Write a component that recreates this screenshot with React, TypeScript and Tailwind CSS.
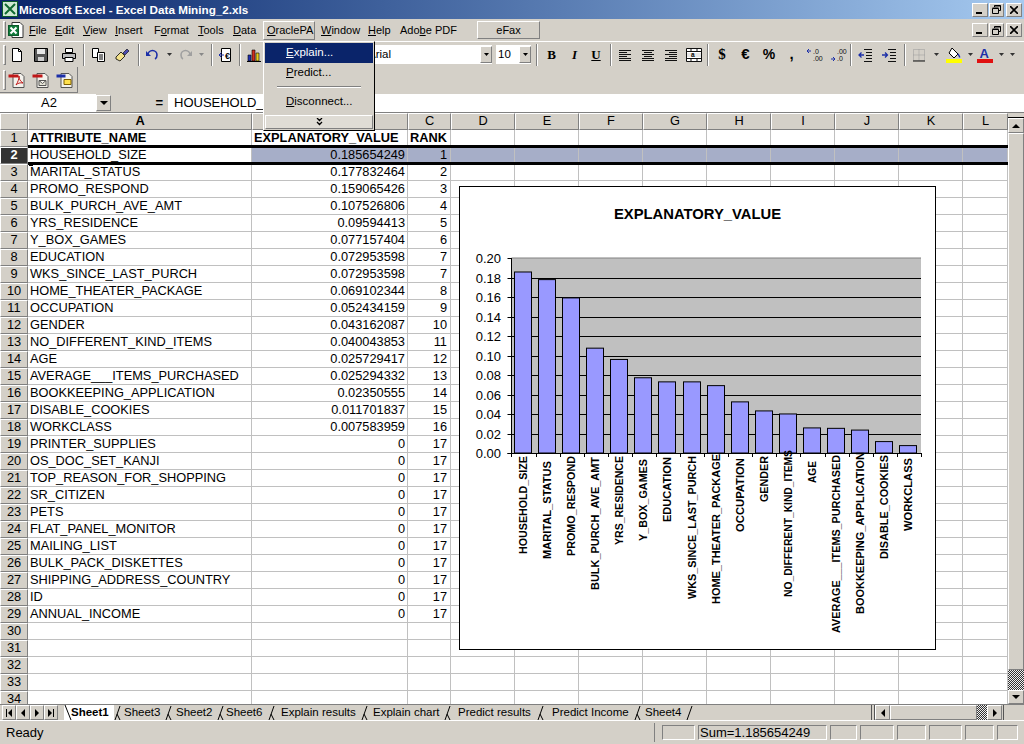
import React from 'react';

const raised = 'border border-t-white border-l-white border-b-[#808080] border-r-[#808080]';
const sunken = 'border border-t-[#808080] border-l-[#808080] border-b-white border-r-white';

const rows: [string, string, string][] = [
  ['HOUSEHOLD_SIZE', '0.185654249', '1'],
  ['MARITAL_STATUS', '0.177832464', '2'],
  ['PROMO_RESPOND', '0.159065426', '3'],
  ['BULK_PURCH_AVE_AMT', '0.107526806', '4'],
  ['YRS_RESIDENCE', '0.09594413', '5'],
  ['Y_BOX_GAMES', '0.077157404', '6'],
  ['EDUCATION', '0.072953598', '7'],
  ['WKS_SINCE_LAST_PURCH', '0.072953598', '7'],
  ['HOME_THEATER_PACKAGE', '0.069102344', '8'],
  ['OCCUPATION', '0.052434159', '9'],
  ['GENDER', '0.043162087', '10'],
  ['NO_DIFFERENT_KIND_ITEMS', '0.040043853', '11'],
  ['AGE', '0.025729417', '12'],
  ['AVERAGE___ITEMS_PURCHASED', '0.025294332', '13'],
  ['BOOKKEEPING_APPLICATION', '0.02350555', '14'],
  ['DISABLE_COOKIES', '0.011701837', '15'],
  ['WORKCLASS', '0.007583959', '16'],
  ['PRINTER_SUPPLIES', '0', '17'],
  ['OS_DOC_SET_KANJI', '0', '17'],
  ['TOP_REASON_FOR_SHOPPING', '0', '17'],
  ['SR_CITIZEN', '0', '17'],
  ['PETS', '0', '17'],
  ['FLAT_PANEL_MONITOR', '0', '17'],
  ['MAILING_LIST', '0', '17'],
  ['BULK_PACK_DISKETTES', '0', '17'],
  ['SHIPPING_ADDRESS_COUNTRY', '0', '17'],
  ['ID', '0', '17'],
  ['ANNUAL_INCOME', '0', '17'],
];

const gridCols = 'grid grid-cols-[28px_224px_156px_43px_64px_64px_64px_64px_64px_64px_64px_64px_45px]';
const emptyCols = ['D', 'E', 'F', 'G', 'H', 'I', 'J', 'K', 'L'];

// label: start = lower end of the rotated text, len = its length on screen
const bars = [
  { name: 'HOUSEHOLD_SIZE', v: 0.185654, start: 554, len: 98 },
  { name: 'MARITAL_STATUS', v: 0.177832, start: 559, len: 98 },
  { name: 'PROMO_RESPOND', v: 0.159065, start: 556, len: 100 },
  { name: 'BULK_PURCH_AVE_AMT', v: 0.107527, start: 590, len: 133 },
  { name: 'YRS_RESIDENCE', v: 0.095944, start: 545, len: 89 },
  { name: 'Y_BOX_GAMES', v: 0.077157, start: 541, len: 82 },
  { name: 'EDUCATION', v: 0.072954, start: 522, len: 65 },
  { name: 'WKS_SINCE_LAST_PURCH', v: 0.072954, start: 599, len: 143 },
  { name: 'HOME_THEATER_PACKAGE', v: 0.069102, start: 604, len: 150 },
  { name: 'OCCUPATION', v: 0.052434, start: 532, len: 74 },
  { name: 'GENDER', v: 0.043162, start: 502, len: 46 },
  { name: 'NO_DIFFERENT_KIND_ITEMS', v: 0.040044, start: 597, len: 147 },
  { name: 'AGE', v: 0.025729, start: 483, len: 22 },
  { name: 'AVERAGE___ITEMS_PURCHASED', v: 0.025294, start: 633, len: 178 },
  { name: 'BOOKKEEPING_APPLICATION', v: 0.023506, start: 614, len: 162 },
  { name: 'DISABLE_COOKIES', v: 0.011702, start: 559, len: 104 },
  { name: 'WORKCLASS', v: 0.007584, start: 531, len: 73 },
];

const tabs = [
  { name: 'Sheet1', w: 'w-[50px]', pl: 'pl-[7px]' },
  { name: 'Sheet3', w: 'w-[51px]', pl: 'pl-[10px]' },
  { name: 'Sheet2', w: 'w-[52px]', pl: 'pl-[11px]' },
  { name: 'Sheet6', w: 'w-[51px]', pl: 'pl-[9px]' },
  { name: 'Explain results', w: 'w-[93px]', pl: 'pl-[13px]' },
  { name: 'Explain chart', w: 'w-[83px]', pl: 'pl-[12px]' },
  { name: 'Predict results', w: 'w-[93px]', pl: 'pl-[14px]' },
  { name: 'Predict Income', w: 'w-[97px]', pl: 'pl-[15px]' },
  { name: 'Sheet4', w: 'w-[52px]', pl: 'pl-[11px]' },
];

function Ico({ children, w = 16 }: { children: React.ReactNode; w?: number }) {
  return (
    <svg width={w} height={16} viewBox={`0 0 ${w} 16`} className="block shrink-0">
      {children}
    </svg>
  );
}

function Slot({ w, children }: { w: string; children?: React.ReactNode }) {
  return <div className={`${w} flex h-full shrink-0 items-center justify-center`}>{children}</div>;
}

function Sep() {
  return <div className="mx-[1px] h-[22px] w-[2px] shrink-0 border-l border-l-[#808080] border-r border-r-white" />;
}

function Caret({ color = '#000' }: { color?: string }) {
  return (
    <svg width="5" height="3" viewBox="0 0 5 3" className="block shrink-0">
      <path d="M0 0h5L2.5 3z" fill={color} />
    </svg>
  );
}

function WinButtons() {
  return (
    <div className="flex gap-[1px]">
      <div className={`${raised} flex h-[14px] w-[16px] items-end bg-[#d4d0c8] pb-[2px] pl-[3px]`}>
        <div className="h-[2px] w-[6px] bg-black" />
      </div>
      <div className={`${raised} mr-[1px] flex h-[14px] w-[15px] items-center justify-center bg-[#d4d0c8]`}>
        <svg width="9" height="9" viewBox="0 0 9 9">
          <path d="M2.5 2V.5h6v5H7M.5 3.5h6v5h-6zM.5 3h6M2.5 1h6" fill="none" stroke="#000" />
        </svg>
      </div>
      <div className={`${raised} flex h-[14px] w-[16px] items-center justify-center bg-[#d4d0c8]`}>
        <svg width="8" height="8" viewBox="0 0 8 8">
          <path d="M0 0l8 8M8 0L0 8" stroke="#000" strokeWidth="1.6" />
        </svg>
      </div>
    </div>
  );
}

function MenuItem({ w, first, rest, pre = '', on = false }: { w: string; first: string; rest: string; pre?: string; on?: boolean }) {
  return (
    <div className={`${w} flex h-[19px] shrink-0 items-center whitespace-nowrap ${on ? `${raised} pl-[3px]` : 'pl-[1px]'}`}>
      <span>
        {pre}
        <span className="underline">{first}</span>
        {rest}
      </span>
    </div>
  );
}

function ExcelIcon({ page = false }: { page?: boolean }) {
  return (
    <Ico>
      {page && <path d="M4 .5h8l3 3v12H4z" fill="#fff" stroke="#333" />}
      <rect x={0.5} y={page ? 3.5 : 0.5} width={page ? 10 : 15} height={page ? 10 : 15} fill={page ? '#0f7a3a' : '#cfe8d2'} stroke="#0a5a2a" />
      <path d={page ? 'M2.5 5.5l6 6M8.5 5.5l-6 6' : 'M3 3l10 10M13 3L3 13'} stroke={page ? '#fff' : '#0f6a30'} strokeWidth="2" />
    </Ico>
  );
}

function PdfIcon({ kind }: { kind: number }) {
  return (
    <Ico w={18}>
      <path d="M5 1.500h8l3 3v11H5z" fill="#f4f2ec" stroke="#555" />
      {kind === 0 && <path d="M8 13c2-3 3-6 3-9 0 3 1 5 4 7-3-.5-5 0-7 2z" fill="none" stroke="#c01818" />}
      {kind === 1 && <path d="M7 8.500h7v5H7zM7 8.500l3.500 3 3.500-3" fill="#e8e6d8" stroke="#555" />}
      {kind === 2 && <path d="M8 7.500h7v5H8z" fill="#ffe14d" stroke="#806000" />}
      <rect x="0.500" y="2.500" width={kind === 2 ? 9 : 10} height="3" fill={kind === 2 ? '#1c2fa8' : '#c01818'} />
    </Ico>
  );
}

function LinesIcon({ kind }: { kind: 'l' | 'c' | 'r' }) {
  const lines = [
    [2, 14],
    [kind === 'l' ? 2 : kind === 'c' ? 4 : 6, kind === 'l' ? 10 : kind === 'c' ? 12 : 14],
    [2, 14],
    [kind === 'l' ? 2 : kind === 'c' ? 4 : 6, kind === 'l' ? 10 : kind === 'c' ? 12 : 14],
    [2, 14],
  ];
  return (
    <Ico>
      {lines.map(([a, b], i) => (
        <path key={i} d={`M${a} ${3.5 + i * 2}H${b}`} stroke="#111" />
      ))}
      <path d="M2 13.500H14" stroke="#111" />
    </Ico>
  );
}

function DecimalIcon({ inc }: { inc: boolean }) {
  return (
    <Ico w={18}>
      <text x="7" y="7" fontSize="7" fontFamily="'Liberation Sans', sans-serif" fill="#111">{inc ? '.0' : '.00'}</text>
      <text x="7" y="14" fontSize="7" fontFamily="'Liberation Sans', sans-serif" fill="#111">{inc ? '.00' : '.0'}</text>
      <path d={inc ? 'M1 4h4M3 2l-2 2 2 2' : 'M1 12h4M3 10l2 2-2 2'} fill="none" stroke="#1c2fa8" />
    </Ico>
  );
}

function IndentIcon({ flip }: { flip: boolean }) {
  return (
    <Ico>
      <path d="M7 2.500h8M9 5.500h6M9 8.500h6M9 11.500h6M7 14.500h8" stroke="#111" />
      <path d={flip ? 'M1 8h5M4 5.500L6.500 8 4 10.500' : 'M2 8h5M4.500 5.500L2 8l2.500 2.500'} fill="none" stroke="#1c2fa8" strokeWidth="1.300" />
    </Ico>
  );
}

function Chart() {
  const left = 511.5;
  const right = 921;
  const top = 258;
  const base = 453;
  const ticks = [0, 0.02, 0.04, 0.06, 0.08, 0.1, 0.12, 0.14, 0.16, 0.18, 0.2];
  const y = (v: number) => base - (v / 0.2) * (base - top);
  return (
    <svg width="478" height="465" viewBox="459 186 478 465" className="absolute left-[459px] top-[73px] block">
      <rect x="459.500" y="186.500" width="476" height="463" fill="#fff" stroke="#000" />
      <text x="697.500" y="219" textAnchor="middle" textLength="167" lengthAdjust="spacingAndGlyphs" fontSize="14" fontWeight="700" fontFamily="'Liberation Sans', Arial, sans-serif" fill="#000">
        EXPLANATORY_VALUE
      </text>
      <rect x={left} y={top} width={right - left} height={base - top} fill="#c0c0c0" />
      <path d={`M${left} ${top}H${right}`} stroke="#808080" />
      {ticks.map((t) => (
        <g key={t}>
          {t > 0 && t < 0.2 && <path d={`M${left} ${Math.round(y(t)) + 0.5}H${right}`} stroke="#000" />}
          <path d={`M${left - 4} ${Math.round(y(t)) + 0.5}H${left}`} stroke="#000" />
          <text x="501" y={y(t) + 5} textAnchor="end" fontSize="13" fontFamily="'Liberation Sans', Arial, sans-serif" fill="#000">
            {t.toFixed(2)}
          </text>
        </g>
      ))}
      <path d={`M${left} ${top}V${base + 4}M${left - 4} ${base + 0.5}H${right}`} stroke="#000" />
      {bars.map((b, i) => {
        const x = Math.round(514 + i * 24.08) + 0.5;
        const h = y(b.v);
        const cx = 523 + i * 24.08;
        return (
          <g key={b.name}>
            <rect x={x} y={h} width="17" height={base - h} fill="#9999ff" stroke="#000" />
            <path d={`M${Math.round(left + (i + 1) * 24.08) + 0.5} ${base}v4`} stroke="#000" />
            <text
              transform={`rotate(-90 ${cx + 4} ${b.start})`}
              x={cx + 4}
              y={b.start}
              textLength={b.len}
              lengthAdjust="spacingAndGlyphs"
              fontSize="11"
              fontWeight="700"
              fontFamily="'Liberation Sans', Arial, sans-serif"
              fill="#000"
            >
              {b.name}
            </text>
          </g>
        );
      })}
    </svg>
  );
}

function ScrollArrow({ dir }: { dir: 'up' | 'down' | 'left' | 'right' }) {
  const d = { up: 'M0 4L4 0l4 4z', down: 'M0 0h8L4 4z', left: 'M4 0v8L0 4z', right: 'M0 0l4 4-4 4z' }[dir];
  const box = dir === 'up' || dir === 'down' ? '0 0 8 4' : '0 0 4 8';
  return (
    <svg width={dir === 'up' || dir === 'down' ? 8 : 4} height={dir === 'up' || dir === 'down' ? 4 : 8} viewBox={box}>
      <path d={d} fill="#000" />
    </svg>
  );
}

function NavButton({ children }: { children: React.ReactNode }) {
  return <div className={`${raised} flex h-[15px] w-[14px] items-center justify-center`}>{children}</div>;
}

export default function App() {
  return (
    <div className="relative flex h-[744px] w-[1024px] flex-col overflow-hidden bg-[#d4d0c8] font-['Liberation_Sans',Arial,sans-serif] text-[11px] text-black">
      {/* title bar */}
      <div className="flex h-[19px] shrink-0 items-center justify-between bg-gradient-to-r from-[#0a246a] to-[#a6caf0] pl-[2px] pr-[2px]">
        <div className="flex items-center gap-[1px] text-[11.700px] font-bold text-white">
          <ExcelIcon />
          <span>Microsoft Excel - Excel Data Mining_2.xls</span>
        </div>
        <WinButtons />
      </div>

      {/* menu bar */}
      <div className="flex h-[22px] shrink-0 items-center justify-between pr-[2px]">
        <div className="flex items-center text-[11px]">
          <div className="ml-[3px] mr-[2px] h-[18px] w-[3px] border border-t-white border-l-white border-b-[#808080] border-r-[#808080]" />
          <div className="mr-[4px] w-[16px]"><ExcelIcon page /></div>
          <MenuItem w="w-[26px]" first="F" rest="ile" />
          <MenuItem w="w-[28px]" first="E" rest="dit" />
          <MenuItem w="w-[32px]" first="V" rest="iew" />
          <MenuItem w="w-[39px]" first="I" rest="nsert" />
          <MenuItem w="w-[44px]" pre="F" first="o" rest="rmat" />
          <MenuItem w="w-[35px]" first="T" rest="ools" />
          <MenuItem w="w-[31px]" first="D" rest="ata" />
          <MenuItem w="w-[52px]" first="O" rest="raclePA" on />
          <div className="w-[5px] shrink-0" />
          <MenuItem w="w-[47px]" first="W" rest="indow" />
          <MenuItem w="w-[32px]" first="H" rest="elp" />
          <MenuItem w="w-[78px]" pre="Ado" first="b" rest="e PDF" />
          <div className={`${raised} flex h-[18px] w-[63px] items-center justify-center`}>eFax</div>
        </div>
        <WinButtons />
      </div>

      {/* standard + formatting toolbar */}
      <div className="flex h-[26px] shrink-0 items-center border-t border-t-white text-[12px]">
        <div className="ml-[3px] mr-[2px] h-[20px] w-[3px] border border-t-white border-l-white border-b-[#808080] border-r-[#808080]" />
        <Slot w="w-[18px]">
          <Ico><path d="M3.500 1.500h6l3 3v10h-9z" fill="#fff" stroke="#000" /><path d="M9.500 1.500v3h3" fill="none" stroke="#000" /></Ico>
        </Slot>
        <div className="w-[3px] shrink-0" />
        <Slot w="w-[23px]">
          <Ico><path d="M1.500 1.500h13v13h-13z" fill="#555" stroke="#000" /><path d="M4 2h8v5H4z" fill="#e6e6e6" /><path d="M5 10h6v4H5z" fill="#cfcfcf" /></Ico>
        </Slot>
        <Sep />
        <Slot w="w-[26px]">
          <Ico><path d="M4.500 1.500h7v4h-7z" fill="#fff" stroke="#000" /><path d="M1.500 6.500h13v5h-13z" fill="#bbb" stroke="#000" /><path d="M4 10.500h8v4H4z" fill="#fff" stroke="#000" /></Ico>
        </Slot>
        <Sep />
        <Slot w="w-[24px]">
          <Ico><path d="M2.500 1.500h6v9h-6z" fill="#fff" stroke="#000" /><path d="M7.500 5.500h7v9h-7z" fill="#fff" stroke="#000" /><path d="M9 8h4M9 10h4M9 12h4" stroke="#000" /></Ico>
        </Slot>
        <Slot w="w-[24px]">
          <Ico><path d="M9 6l4-4 2 2-4 4z" fill="#4a4ab0" stroke="#000" strokeWidth=".6" /><path d="M2 10l5-5 4 4-5 5-4-2z" fill="#f4e28a" stroke="#000" strokeWidth=".8" /></Ico>
        </Slot>
        <div className="w-[3px] shrink-0" />
        <Sep />
        <Slot w="w-[24px]">
          <Ico><path d="M3 8a4.500 4.500 0 0 1 9 0c0 2-1 3.500-2 4" fill="none" stroke="#1c2fa8" strokeWidth="1.600" /><path d="M1 4v5h5z" fill="#1c2fa8" /></Ico>
        </Slot>
        <Slot w="w-[9px]"><Caret color="#333" /></Slot>
        <Slot w="w-[22px]">
          <Ico><path d="M13 8a4.500 4.500 0 0 0-9 0c0 2 1 3.500 2 4" fill="none" stroke="#a0a0a0" strokeWidth="1.600" /><path d="M15 4v5h-5z" fill="#a0a0a0" /></Ico>
        </Slot>
        <Slot w="w-[11px]"><Caret color="#888" /></Slot>
        <div className="w-[3px] shrink-0" />
        <Sep />
        <Slot w="w-[24px]">
          <Ico><path d="M3.500 1.500h9v13h-9z" fill="#fff" stroke="#000" /><path d="M1 8h5M3.500 5.500L1 8l2.500 2.500" fill="none" stroke="#1c2fa8" /><text x="7" y="12" fontSize="9" fontWeight="700" fill="#000">€</text></Ico>
        </Slot>
        <Sep />
        <Slot w="w-[24px]">
          <Ico><path d="M2 8h3v6H2z" fill="#2030b0" stroke="#000" strokeWidth=".6" /><path d="M6 3h3v11H6z" fill="#d03020" stroke="#000" strokeWidth=".6" /><path d="M10 6h3v8h-3z" fill="#e8d020" stroke="#000" strokeWidth=".6" /><path d="M1 14.500h14" stroke="#000" /></Ico>
        </Slot>
        <div className="w-[100px] shrink-0" />
        <div className="flex h-[19px] w-[126px] shrink-0 items-center justify-between bg-white pl-[2px]">
          <span className="text-[11.500px]">Arial</span>
          <div className={`${raised} flex h-[17px] w-[12px] items-center justify-center bg-[#d4d0c8]`}><Caret /></div>
        </div>
        <div className="ml-[4px] flex h-[19px] w-[35px] shrink-0 items-center justify-between bg-white pl-[2px]">
          <span className="text-[11.500px]">10</span>
          <div className={`${raised} flex h-[17px] w-[12px] items-center justify-center bg-[#d4d0c8]`}><Caret /></div>
        </div>
        <div className="w-[4px]" />
        <Sep />
        <Slot w="w-[25px]"><span className="font-['Liberation_Serif',serif] text-[13px] font-bold">B</span></Slot>
        <Slot w="w-[21px]"><span className="font-['Liberation_Serif',serif] text-[13px] font-bold italic">I</span></Slot>
        <Slot w="w-[22px]"><span className="font-['Liberation_Serif',serif] text-[13px] font-bold underline">U</span></Slot>
        <div className="w-[2px]" />
        <Sep />
        <Slot w="w-[23px]"><LinesIcon kind="l" /></Slot>
        <Slot w="w-[23px]"><LinesIcon kind="c" /></Slot>
        <Slot w="w-[23px]"><LinesIcon kind="r" /></Slot>
        <Slot w="w-[24px]">
          <Ico><path d="M.500 1.500h15v13H.500z" fill="#fff" stroke="#111" /><path d="M.500 4.500h15M.500 11.500h15M5 1v3M11 1v3M5 12v3M11 12v3" stroke="#111" /><path d="M1 6h14v4H1z" fill="#e8e8e8" /><text x="5" y="10" fontSize="6.500" fontWeight="700" fill="#000">a</text></Ico>
        </Slot>
        <Sep />
        <Slot w="w-[24px]"><span className="font-['Liberation_Serif',serif] text-[15px] font-bold">$</span></Slot>
        <Slot w="w-[23px]"><span className="text-[15px] font-bold">€</span></Slot>
        <Slot w="w-[24px]"><span className="text-[14px] font-bold">%</span></Slot>
        <Slot w="w-[21px]"><span className="text-[15px] font-bold">,</span></Slot>
        <Slot w="w-[26px]"><DecimalIcon inc /></Slot>
        <Slot w="w-[21px]"><DecimalIcon inc={false} /></Slot>
        <Sep />
        <Slot w="w-[24px]"><IndentIcon flip={false} /></Slot>
        <Slot w="w-[24px]"><IndentIcon flip /></Slot>
        <div className="w-[2px] shrink-0" />
        <Sep />
        <Slot w="w-[23px]">
          <Ico><path d="M2.500 2.500h11v11h-11zM8 2.500v11M2.500 8h11" fill="none" stroke="#9a9a9a" strokeDasharray="1 1" /><path d="M2 14h12" stroke="#111" /></Ico>
        </Slot>
        <Slot w="w-[12px]"><Caret color="#333" /></Slot>
        <Slot w="w-[24px]">
          <Ico><path d="M6 1l6 6-4 4-5-5z" fill="#fff" stroke="#000" /><path d="M12 7c1 1.500 2 2.500 1.500 3.500" fill="none" stroke="#1c2fa8" strokeWidth="1.500" /><path d="M0 12h16v4H0z" fill="#ffff00" /></Ico>
        </Slot>
        <Slot w="w-[8px]"><Caret color="#333" /></Slot>
        <Slot w="w-[22px]">
          <Ico><text x="2.500" y="10.500" fontSize="13" fontWeight="700" fill="#1c2fa8">A</text><path d="M0 12h16v4H0z" fill="#e01010" /></Ico>
        </Slot>
        <Slot w="w-[10px]"><Caret color="#333" /></Slot>
        <Slot w="w-[12px]"><Caret color="#333" /></Slot>
      </div>

      {/* pdf toolbar */}
      <div className="flex h-[27px] shrink-0">
        <div className="flex h-[26px] w-[78px] items-center border-r border-r-[#808080] border-b border-b-[#808080] pl-[3px]">
          <div className="mr-[1px] h-[20px] w-[3px] border border-t-white border-l-white border-b-[#808080] border-r-[#808080]" />
          <div className="flex gap-[6px] pl-[1px]"><PdfIcon kind={0} /><PdfIcon kind={1} /><PdfIcon kind={2} /></div>
        </div>
      </div>

      {/* formula bar */}
      <div className="flex h-[18px] shrink-0 items-center text-[13px]">
        <div className="flex h-full w-[96px] shrink-0 items-center justify-center bg-white pb-[1px] pl-[2px]">A2</div>
        <div className={`${raised} flex h-[16px] w-[15px] shrink-0 items-center justify-center`}><ScrollArrow dir="down" /></div>
        <div className="flex w-[57px] shrink-0 justify-end pr-[5px] font-bold">=</div>
        <div className="flex h-full flex-1 items-center bg-white pb-[1px] pl-[6px]">HOUSEHOLD_</div>
      </div>

      {/* sheet + vertical scrollbar */}
      <div className="flex h-[592px] shrink-0 border-t border-t-[#808080]">
        <div className="relative h-full w-[1008px] shrink-0 overflow-hidden bg-white text-[12.800px]">
          <div className={`${gridCols} h-[17px] leading-[13px]`}>
            <div className={`${raised} bg-[#d4d0c8]`} />
            <div className={`${raised} flex justify-center bg-[#d4d0c8] font-bold`}>A</div>
            <div className={`${raised} flex justify-center bg-[#d4d0c8]`}>B</div>
            <div className={`${raised} flex justify-center bg-[#d4d0c8]`}>C</div>
            {emptyCols.map((c) => (
              <div key={c} className={`${raised} flex justify-center bg-[#d4d0c8]`}>{c}</div>
            ))}
          </div>

          <div className={`${gridCols} h-[17px] leading-[15px]`}>
            <div className={`${raised} flex justify-center bg-[#d4d0c8] leading-[13px]`}>1</div>
            <div className="border-r border-b border-[#c0c0c0] pl-[2px] font-bold">ATTRIBUTE_NAME</div>
            <div className="border-r border-b border-[#c0c0c0] pl-[2px] font-bold whitespace-nowrap">EXPLANATORY_VALUE</div>
            <div className="border-r border-b border-[#c0c0c0] pl-[2px] font-bold">RANK</div>
            {emptyCols.map((c) => (
              <div key={c} className="border-r border-b border-[#c0c0c0]" />
            ))}
          </div>

          {Array.from({ length: 33 }, (_, i) => {
            const n = i + 2;
            const r = rows[i];
            const sel = n === 2;
            const fill = sel ? 'bg-[#a6aec8]' : '';
            return (
              <div key={n} className={`${gridCols} h-[17px] leading-[15px]`}>
                <div className={`${raised} flex justify-center leading-[13px] ${sel ? 'bg-[#333333] font-bold text-white' : 'bg-[#d4d0c8]'}`}>{n}</div>
                <div className="overflow-hidden whitespace-nowrap border-r border-b border-[#c0c0c0] pl-[2px]">{r ? r[0] : ''}</div>
                <div className={`border-r border-b border-[#c0c0c0] pr-[2px] text-right ${fill}`}>{r ? r[1] : ''}</div>
                <div className={`border-r border-b border-[#c0c0c0] pr-[3px] text-right ${fill}`}>{r ? r[2] : ''}</div>
                {emptyCols.map((c) => (
                  <div key={c} className={`border-r border-b border-[#c0c0c0] ${fill}`} />
                ))}
              </div>
            );
          })}

          {/* row selection outline and fill handle */}
          <div className="absolute left-[28px] right-0 top-[32px] h-[20px] border-y-[3px] border-black" />
          <div className="absolute left-[29px] top-[49px] h-[4px] w-[4px] bg-black" />
          <Chart />
        </div>

        <div className="flex h-full w-[16px] shrink-0 flex-col">
          <div className="h-[5px] shrink-0 border-b border-b-black" />
          <div className={`${raised} flex h-[15px] shrink-0 items-center justify-center`}><ScrollArrow dir="up" /></div>
          <div className={`${raised} flex-1 bg-[#d4d0c8]`} />
          <div className="h-[20px] shrink-0 bg-[repeating-conic-gradient(#333333_0_25%,#f0f0f0_0_50%)] bg-[length:2px_2px]" />
          <div className={`${raised} flex h-[14px] shrink-0 items-center justify-center`}><ScrollArrow dir="down" /></div>
        </div>
      </div>

      {/* sheet tabs + horizontal scrollbar */}
      <div className="flex h-[16px] shrink-0 items-center border-t border-t-[#808080] text-[11.500px]">
        <div className="flex w-[64px] shrink-0 pl-[2px]">
          <NavButton><div className="mr-[1px] h-[8px] w-[1px] bg-black" /><ScrollArrow dir="left" /></NavButton>
          <NavButton><ScrollArrow dir="left" /></NavButton>
          <NavButton><ScrollArrow dir="right" /></NavButton>
          <NavButton><ScrollArrow dir="right" /><div className="ml-[1px] h-[8px] w-[1px] bg-black" /></NavButton>
        </div>
        <div className="flex h-full w-[806px] shrink-0 items-center">
          {tabs.map((t, i) => (
            <div key={t.name} className={`relative flex h-full shrink-0 items-center ${t.w} ${t.pl} ${i === 0 ? 'bg-white font-bold' : ''}`}>
              <svg width="9" height="16" viewBox="0 0 9 16" className="absolute left-0 top-0">
                {i === 0 ? (
                  <path d="M1 0l6 15" stroke="#000" fill="none" />
                ) : (
                  <path d="M1 15L6 1M3 9l3 6" stroke="#000" fill="none" />
                )}
              </svg>
              {t.name}
            </div>
          ))}
          <svg width="9" height="16" viewBox="0 0 9 16" className="shrink-0">
            <path d="M1 15L6 1" stroke="#000" fill="none" />
          </svg>
        </div>
        <div className="flex h-full flex-1 items-center pl-[1px]">
          <div className="h-full w-[4px] border-x border-x-[#555555]" />
          <div className={`${raised} flex h-[15px] w-[15px] shrink-0 items-center justify-center`}><ScrollArrow dir="left" /></div>
          <div className={`${raised} h-[15px] w-[87px] shrink-0`} />
          <div className="h-[15px] w-[10px] shrink-0 bg-[repeating-conic-gradient(#333333_0_25%,#f0f0f0_0_50%)] bg-[length:2px_2px]" />
          <div className={`${raised} flex h-[15px] w-[15px] shrink-0 items-center justify-center`}><ScrollArrow dir="right" /></div>
          <div className="h-full w-[2px] border-r border-r-[#555555]" />
        </div>
      </div>

      {/* status bar */}
      <div className="flex flex-1 items-center border-t border-t-white text-[13px]">
        <div className="w-[655px] shrink-0 border-r border-r-[#808080] pl-[6px]">Ready</div>
        <div className="flex items-center pl-[7px]">
          <div className={`${sunken} h-[15px] w-[33px]`} />
          <div className={`${sunken} ml-[3px] flex h-[15px] w-[129px] items-center whitespace-nowrap pl-[1px]`}>Sum=1.185654249</div>
          <div className={`${sunken} ml-[3px] h-[15px] w-[27px]`} />
          <div className={`${sunken} ml-[3px] h-[15px] w-[34px]`} />
          <div className={`${sunken} ml-[3px] h-[15px] w-[29px]`} />
          <div className={`${sunken} ml-[3px] h-[15px] w-[33px]`} />
          <div className={`${sunken} ml-[3px] h-[15px] w-[29px]`} />
          <div className={`${sunken} ml-[3px] h-[15px] w-[21px]`} />
        </div>
      </div>

      {/* open OraclePA menu */}
      <div className="absolute left-[263px] top-[41px] flex h-[90px] w-[112px] flex-col border border-t-white border-l-white border-b-black border-r-black bg-[#d4d0c8] p-[1px] text-[11.500px]">
        <div className="flex h-[20px] shrink-0 items-center bg-[#0a246a] pl-[21px] text-white"><span><span className="underline">E</span>xplain...</span></div>
        <div className="flex h-[19px] shrink-0 items-center pl-[21px]"><span><span className="underline">P</span>redict...</span></div>
        <div className="mx-[12px] my-[4px] h-[2px] shrink-0 border-t border-t-[#808080] border-b border-b-white" />
        <div className="flex h-[19px] shrink-0 items-center pl-[21px]"><span><span className="underline">D</span>isconnect...</span></div>
        <div className={`${raised} mt-auto flex h-[14px] shrink-0 items-center justify-center bg-[#dfdcd5]`}>
          <svg width="7" height="8" viewBox="0 0 7 8"><path d="M1 0l2.500 2.500L6 0M1 4l2.500 2.500L6 4" fill="none" stroke="#000" strokeWidth="1.300" /></svg>
        </div>
      </div>
    </div>
  );
}
